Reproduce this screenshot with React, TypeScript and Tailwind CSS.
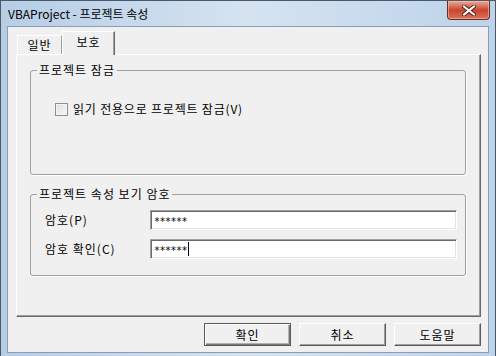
const font = "font-['Noto_Sans_CJK_KR','Noto_Sans',sans-serif]";

function CloseButton() {
  return (
    <div className="mr-[5px] mt-0 flex h-[19px] w-[43px] items-center justify-center rounded-b-[4px] border border-t-0 border-[#6a2d26] bg-gradient-to-b from-[#e9a996] via-[#c8452f] to-[#d9705a] shadow-[inset_0_0_0_1px_rgba(255,210,200,0.5)]">
      <svg width="14" height="11" viewBox="0 0 14 11">
        <path d="M2 1.5 L12 9.5 M12 1.5 L2 9.5" stroke="#5a2018" strokeWidth="4" strokeLinecap="square" />
        <path d="M2 1.5 L12 9.5 M12 1.5 L2 9.5" stroke="#ffffff" strokeWidth="2" strokeLinecap="square" />
      </svg>
    </div>
  );
}

function Checkbox() {
  return (
    <div className="h-[13px] w-[13px] border border-[#8e8f8f] bg-gradient-to-br from-[#dcdcdc] to-[#fbfbfb] shadow-[inset_0_0_0_1px_#f4f4f4]" />
  );
}

function Field({ label, caret }: { label: string; caret?: boolean }) {
  return (
    <div className="flex items-center">
      <span className="w-[119px] pl-[14px] text-[12px] leading-[14px] tracking-[1px] text-black">{label}</span>
      <div className="flex h-[20px] w-[307px] items-center border border-t-[#a0a0a0] border-l-[#a0a0a0] border-b-white border-r-white bg-white pl-[3px] shadow-[inset_1px_1px_0_#696969,inset_-1px_-1px_0_#e3e3e3]">
        <span className="pt-[4px] font-['DejaVu_Sans_Mono',monospace] text-[10px] leading-[12px] tracking-[-0.5px] text-black">******</span>
        {caret && <span className="ml-[1px] h-[14px] w-px bg-black" />}
      </div>
    </div>
  );
}

function Button({ label, primary }: { label: string; primary?: boolean }) {
  return (
    <button
      className={
        'flex h-[23px] w-[87px] items-center justify-center border bg-[#f0f0f0] text-[12px] leading-[14px] tracking-[1px] text-black ' +
        (primary
          ? 'border-[#5a5a5a] shadow-[inset_1px_1px_0_#ffffff,inset_-1px_-1px_0_#7a7a7a,inset_-2px_-2px_0_#b0b0b0]'
          : 'border-t-white border-l-white border-b-[#5a5a5a] border-r-[#5a5a5a] shadow-[inset_-1px_-1px_0_#a0a0a0]')
      }
    >
      {label}
    </button>
  );
}

export default function App() {
  return (
    <div className={`${font} h-[356px] w-[496px] overflow-hidden border border-b-0 border-[#4d5866] bg-gradient-to-r from-[#b6cde6] via-[#d5e3f1] to-[#bdd3ea]`}>
      <div className="flex h-[25px] items-start justify-between">
        <span className="pl-[7px] pt-[6px] text-[12px] leading-[14px] text-black">VBAProject - 프로젝트 속성</span>
        <CloseButton />
      </div>
      <div className="ml-[6px] h-[327px] w-[482px] border border-[#8a9db4] bg-[#f0f0f0]">
        <div className="ml-[9px] mt-[4px] flex h-[23px] items-end">
          <div className="flex h-[19px] w-[45px] items-center justify-center border border-b-0 border-t-white border-l-white border-r-[#a0a0a0] text-[12px] leading-[14px] tracking-[1px]">
            일반
          </div>
          <div className="relative z-10 -mb-px flex h-[24px] w-[53px] items-start justify-center border border-b-0 border-t-white border-l-white border-r-[#696969] bg-[#f0f0f0] pt-[3px] text-[12px] leading-[14px] tracking-[1px] shadow-[inset_-1px_0_0_#a0a0a0]">
            보호
          </div>
        </div>
        <div className="ml-[8px] h-[263px] w-[465px] border border-t-white border-l-white border-r-[#696969] border-b-[#696969] pl-[13px] pt-[8px] shadow-[inset_-1px_-1px_0_#a0a0a0]">
          <fieldset className="h-[112px] w-[436px] rounded-[3px] border border-[#a0a0a0] shadow-[1px_1px_0_#ffffff]">
            <legend className="ml-[6px] px-[2px] text-[12px] leading-[14px] tracking-[1px]">프로젝트 잠금</legend>
            <div className="mt-[25px] flex items-center gap-[5px] pl-[24px]">
              <Checkbox />
              <span className="text-[12px] leading-[14px] tracking-[0.8px]">읽기 전용으로 프로젝트 잠금(V)</span>
            </div>
          </fieldset>
          <fieldset className="mt-[12px] h-[89px] w-[436px] rounded-[3px] border border-[#a0a0a0] shadow-[1px_1px_0_#ffffff]">
            <legend className="ml-[6px] px-[2px] text-[12px] leading-[14px] tracking-[1px]">프로젝트 속성 보기 암호</legend>
            <div className="mt-[9px] flex flex-col gap-[9px]">
              <Field label="암호(P)" />
              <Field label="암호 확인(C)" caret />
            </div>
          </fieldset>
        </div>
        <div className="mt-[6px] flex justify-end gap-[8px] pr-[7px]">
          <Button label="확인" primary />
          <Button label="취소" />
          <Button label="도움말" />
        </div>
      </div>
    </div>
  );
}
